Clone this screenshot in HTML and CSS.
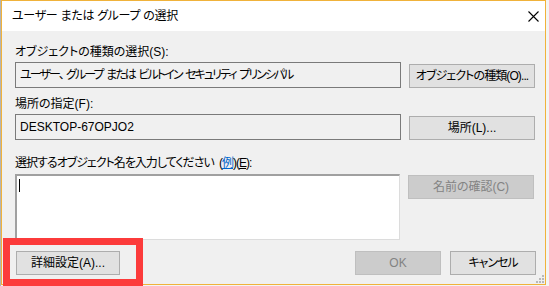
FILE: index.html
```html
<!DOCTYPE html>
<html lang="ja">
<head>
<meta charset="utf-8">
<title>ユーザー または グループ の選択</title>
<link rel="stylesheet" href="styles.css">
</head>
<body>
<div class="screen">
  <div class="window">
    <div class="titlebar">
      <span class="title">ユーザー または グループ の選択</span>
      <svg class="close" width="11" height="11" viewBox="0 0 11 11"><path d="M0.5 0.5L10.5 10.5M10.5 0.5L0.5 10.5" stroke="#000" stroke-width="1.1" fill="none"/></svg>
    </div>
    <div class="content">
      <div class="label">オブジェクトの種類の選択(S):</div>
      <div class="row">
        <div class="field field-kana">ユーザー<span class="comma">、</span>グループ または ビルトイン セキュリティ プリンシパル</div>
        <button class="btn btn-type">オブジェクトの種類(O)...</button>
      </div>
      <div class="label label-gap">場所の指定(F):</div>
      <div class="row">
        <div class="field">DESKTOP-67OPJO2</div>
        <button class="btn">場所(L)...</button>
      </div>
      <div class="label label-gap-lg label-kana">選択するオブジェクト名を入力してください (<span class="link">例</span>)(<u>E</u>):</div>
      <div class="row row-top">
        <div class="textarea"><span class="caret"></span></div>
        <button class="btn btn-disabled btn-check">名前の確認(C)</button>
      </div>
      <div class="footer">
        <button class="btn btn-detail">詳細設定(A)...</button>
        <button class="btn btn-small btn-disabled">OK</button>
        <button class="btn btn-small btn-kana">キャンセル</button>
      </div>
    </div>
    <svg class="grip" width="8" height="8" viewBox="0 0 8 8">
      <rect x="6" y="0" width="2" height="2" fill="#b8b8b8"/>
      <rect x="3" y="3" width="2" height="2" fill="#b8b8b8"/>
      <rect x="6" y="3" width="2" height="2" fill="#b8b8b8"/>
      <rect x="0" y="6" width="2" height="2" fill="#b8b8b8"/>
      <rect x="3" y="6" width="2" height="2" fill="#b8b8b8"/>
      <rect x="6" y="6" width="2" height="2" fill="#b8b8b8"/>
    </svg>
  </div>
</div>
<div class="highlight"></div>
</body>
</html>
```
FILE: styles.css
```css
* { box-sizing: border-box; margin: 0; padding: 0; }
html, body { width: 549px; height: 286px; overflow: hidden; }
body {
  position: relative;
  background: #f4f4f4;
  font-family: "Liberation Sans", "Noto Sans CJK JP", sans-serif;
  font-size: 12px;
  color: #000;
  font-feature-settings: "palt";
}
.screen {
  display: flex;
  height: 286px;
  background: linear-gradient(to right, #b4b4b4 1px, #f4f4f4 1px);
}
.window {
  position: relative;
  margin-left: 1px;
  width: 545px;
  height: 285px;
  border: 1px solid #f0b23a;
  background: #f0f0f0;
  display: flex;
  flex-direction: column;
}
.titlebar {
  height: 30px;
  background: #fff;
  display: flex;
  align-items: center;
  justify-content: space-between;
  padding: 0 6px 0 10px;
}
.title { line-height: 16px; white-space: nowrap; letter-spacing: -0.3px; }
.close { display: block; }
.content {
  flex: 1;
  display: flex;
  flex-direction: column;
  padding: 13px 9px 0 13px;
}
.label { height: 16px; line-height: 16px; white-space: nowrap; }
.label-gap { margin-top: 8px; }
.label-gap-lg { margin-top: 15px; }
.label-kana { letter-spacing: -1px; word-spacing: 3px; }
.link { color: #0066cc; text-decoration: underline; }
.comma { margin-right: 3px; }
.row {
  display: flex;
  align-items: flex-end;
  gap: 8px;
  margin-top: 2px;
}
.row-top { align-items: flex-start; margin-top: 3px; }
.field {
  width: 386px;
  height: 26px;
  border: 1px solid #7a7a7a;
  padding-left: 4px;
  line-height: 24px;
  white-space: nowrap;
}
.field-kana { letter-spacing: -1.9px; word-spacing: 2px; }
.textarea {
  width: 385px;
  height: 66px;
  background: #fff;
  border-style: solid;
  border-width: 2px 1px 1px 2px;
  border-color: #a0a0a0 #dcdcdc #dcdcdc #a0a0a0;
  padding: 3px 0 0 2px;
}
.caret { display: block; width: 1px; height: 13px; background: #000; }
.btn {
  width: 126px;
  height: 24px;
  padding: 0;
  font: inherit;
  color: #000;
  background: #e1e1e1;
  border: 1px solid #adadad;
  line-height: 22px;
  text-align: center;
  white-space: nowrap;
}
.btn-type { letter-spacing: -0.9px; }
.btn-kana { letter-spacing: -1px; }
.btn-disabled { background: #cccccc; border-color: #bfbfbf; color: #838383; }
.btn-check { margin-top: 1px; }
.footer {
  display: flex;
  gap: 9px;
  margin-top: 11px;
}
.btn-detail { width: 104px; margin-left: 1px; margin-right: auto; }
.btn-small { width: 86px; }
.grip { position: absolute; right: 1px; bottom: 1px; }
.highlight {
  position: absolute;
  left: 3px;
  top: 238px;
  width: 140px;
  height: 48px;
  border: 7px solid #fc3b3b;
}
```
